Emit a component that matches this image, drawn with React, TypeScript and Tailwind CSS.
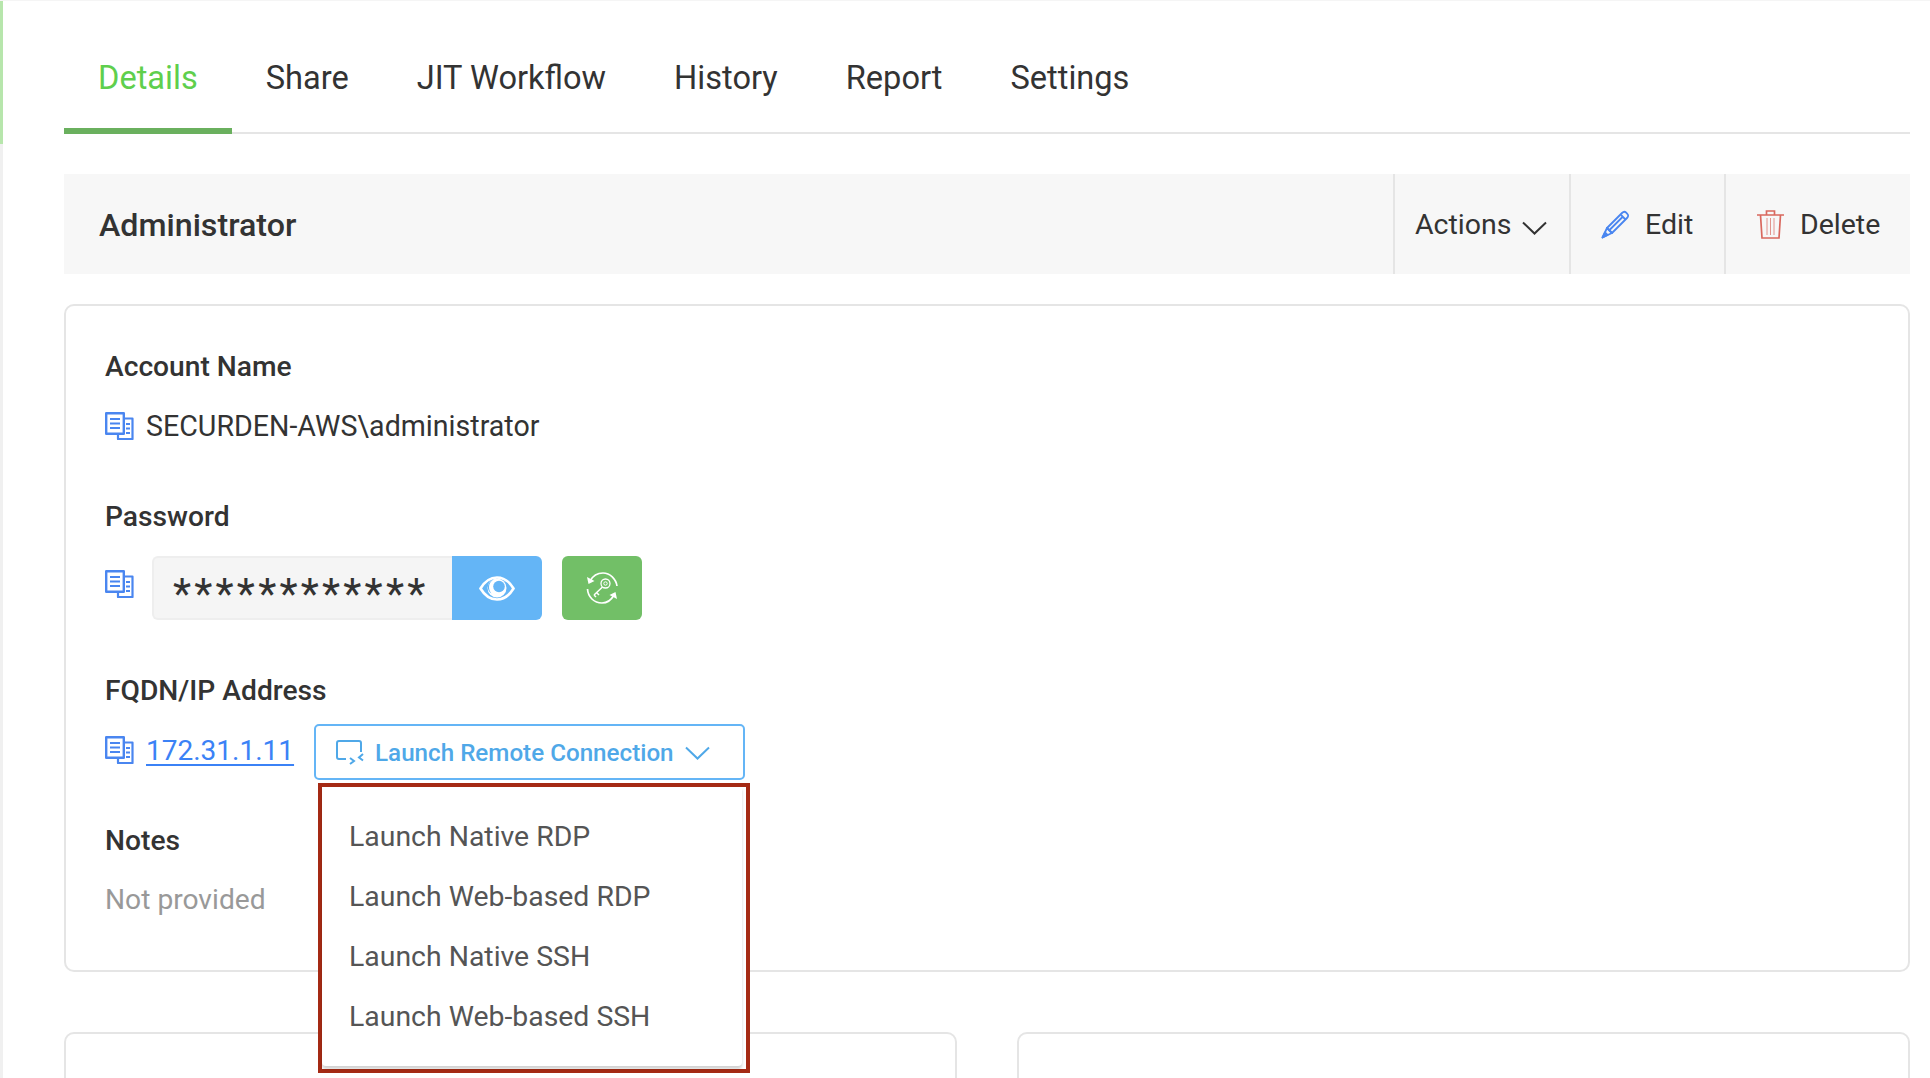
const tabs = ['Details', 'Share', 'JIT Workflow', 'History', 'Report', 'Settings']
const menuItems = ['Launch Native RDP', 'Launch Web-based RDP', 'Launch Native SSH', 'Launch Web-based SSH']

function CopyIcon() {
  return (
    <svg width="29" height="28" viewBox="0 0 29 28" fill="none" stroke="#4a86f0" className="shrink-0">
      <path d="M19 6.500h8.500v20.500H13v-5" strokeWidth="2.200" strokeLinejoin="round" />
      <path d="M1.200 1.200h17.600v20.600H1.200z" strokeWidth="2.400" strokeLinejoin="round" />
      <path d="M5 7h10M5 11.500h10M5 16h10" strokeWidth="2" />
      <path d="M21 12h4M21 16.500h4M21 21h4" strokeWidth="1.800" />
    </svg>
  )
}

function Chevron({ color }: { color: string }) {
  return (
    <svg width="25" height="14" viewBox="0 0 25 14" fill="none" stroke={color} strokeWidth="2" className="shrink-0">
      <path d="M1 1.500 12.500 12.500 24 1.500" />
    </svg>
  )
}

function PencilIcon() {
  return (
    <svg width="29" height="29" viewBox="0 0 29 29" fill="none" stroke="#4a86f0" strokeWidth="1.800" strokeLinejoin="round">
      <path d="M6 18 21 3c1.500-1.500 3-1.500 4.200-.3l1.100 1.100c1.200 1.200 1.200 2.700-.3 4.200L11 23z" />
      <path d="M6 18 1.500 27.500 11 23zM20 5l4.500 4.500M8.500 20 22 6.500" />
      <path d="M1.500 27.500 4 22.500 6.500 25z" fill="#4a86f0" />
    </svg>
  )
}

function TrashIcon() {
  return (
    <svg width="27" height="29" viewBox="0 0 27 29" fill="none" stroke="#d9685e" strokeWidth="1.700">
      <path d="M0 5h27M9.500 5V1h8v4M3.500 5 5 28h17l1.500-23" />
      <path d="M10 8v17M13.500 8v17M17 8v17" strokeWidth="1" opacity="0.7" />
    </svg>
  )
}

function EyeIcon() {
  return (
    <svg width="36" height="25" viewBox="0 0 36 25" fill="none">
      <path d="M1.500 12.500C6 5 11.500 1.500 18 1.500S30 5 34.500 12.500C30 20 24.500 23.500 18 23.500S6 20 1.500 12.500z" stroke="#fff" strokeWidth="2.600" />
      <circle cx="18" cy="12" r="9.500" fill="#fff" />
      <path d="M14.500 3.500a9 9 0 0 0-2 14c-2.500-1.500-4-4-3.500-7.500.3-2.500 2.500-5.500 5.500-6.500z" fill="#64b5f6" />
      <circle cx="20" cy="10.500" r="5.800" fill="#64b5f6" />
    </svg>
  )
}

function KeyRotateIcon() {
  return (
    <svg width="32" height="32" viewBox="0 0 32 32" fill="none" stroke="#fff" strokeWidth="1.500">
      <path d="M4 9C7 3.500 12 1 17 1c7 0 13 6 14 13" strokeWidth="1.700" />
      <path d="M28 23c-3 5.500-7.500 8-12 8C8 31 2 25 1.500 17" strokeWidth="1.700" />
      <path d="M1 5l1.500 7 6-3z" fill="#fff" stroke="none" />
      <path d="M31 27l-1.500-7-6 3z" fill="#fff" stroke="none" />
      <circle cx="19.500" cy="11.500" r="4.500" strokeWidth="1.300" />
      <circle cx="19.500" cy="11.500" r="1.700" strokeWidth="1" />
      <path d="M16.500 15 8 23M10.500 20.500l2.500 2.500M8 23l2 2" strokeWidth="1.500" />
    </svg>
  )
}

function RemoteIcon() {
  return (
    <svg width="28" height="25" viewBox="0 0 28 25" fill="none" stroke="#4fa8e8" strokeWidth="2">
      <path d="M10 19H3a2 2 0 0 1-2-2V3a2 2 0 0 1 2-2h20a2 2 0 0 1 2 2v9" />
      <path d="m14 18 4 3-4 3M27 14l-4 3.500 4 3" />
    </svg>
  )
}

function Label({ children, className }: { children: string; className: string }) {
  return <div className={`text-[28.200px] leading-[32px] font-medium text-[#333] ${className}`}>{children}</div>
}

export default function App() {
  return (
    <div className="flex w-[1930px] h-[1078px] overflow-hidden bg-white border-t border-[#f5f5f5] font-['Roboto',sans-serif] text-[#333]">
      <div className="w-[3px] shrink-0 flex flex-col">
        <div className="h-[143px] bg-[#b7e6ac]" />
        <div className="flex-1 bg-[#f0f0f0]" />
      </div>

      <main className="flex-1 pl-[61px] pr-[20px]">
        <nav className="h-[133px] border-b-2 border-[#e5e5e5] flex items-end">
          {tabs.map(t => (
            <a
              key={t}
              className={`px-[34px] pb-[30px] -mb-[2px] border-b-[6px] text-[32.600px] leading-[40px] ${
                t === 'Details' ? 'text-[#5fcf4d] border-[#6ab05e]' : 'text-[#333] border-transparent'
              }`}
            >
              {t}
            </a>
          ))}
        </nav>

        <section className="mt-[40px] h-[100px] bg-[#f7f7f7] flex items-stretch justify-between">
          <h1 className="pl-[35px] pt-[2px] self-center text-[32.200px] font-medium leading-[40px]">Administrator</h1>
          <div className="flex text-[28.500px]">
            <button className="w-[176px] border-l-2 border-[#e5e5e5] pl-[20px] flex items-center gap-[11px]">
              <span className="pt-[2px]">Actions</span>
              <span className="pt-[8px]">
                <Chevron color="#333" />
              </span>
            </button>
            <button className="w-[155px] border-l-2 border-[#e5e5e5] pl-[30px] flex items-center gap-[15px]">
              <PencilIcon />
              <span className="pt-[2px]">Edit</span>
            </button>
            <button className="w-[186px] border-l-2 border-[#e5e5e5] pl-[31px] flex items-center gap-[16px]">
              <TrashIcon />
              <span className="pt-[2px]">Delete</span>
            </button>
          </div>
        </section>

        <section className="mt-[30px] h-[668px] border-2 border-[#e5e5e5] rounded-[10px] pl-[39px] pt-[45px]">
          <Label className="">Account Name</Label>
          <div className="mt-[27px] flex items-center gap-[12px] text-[28.600px] leading-[32px]">
            <CopyIcon />
            SECURDEN-AWS\administrator
          </div>

          <Label className="mt-[59px]">Password</Label>
          <div className="mt-[23px] flex items-center h-[64px]">
            <div className="-mt-[8px] mr-[18px]">
              <CopyIcon />
            </div>
            <div className="w-[300px] h-full bg-[#f5f5f5] border-2 border-r-0 border-[#eeeeee] rounded-l-[6px] pl-[19px] pt-[11px] flex items-center text-[42px] tracking-[3.200px] text-[#333]">
              ************
            </div>
            <button className="w-[90px] h-full bg-[#64b5f6] rounded-r-[6px] flex items-center justify-center">
              <EyeIcon />
            </button>
            <button className="ml-[20px] w-[80px] h-full bg-[#72bf67] rounded-[6px] flex items-center justify-center">
              <KeyRotateIcon />
            </button>
          </div>

          <Label className="mt-[55px]">FQDN/IP Address</Label>
          <div className="mt-[17px] flex items-center h-[56px]">
            <div className="-mt-[4px] mr-[12px]">
              <CopyIcon />
            </div>
            <a className="-mt-[2px] text-[28px] leading-[32px] text-[#3b82f6] underline underline-offset-4">172.31.1.11</a>
            <div className="relative ml-[20px]">
              <button className="w-[431px] h-[56px] border-2 border-[#64b5f6] rounded-[5px] pl-[20px] flex items-center gap-[11px] text-[24.200px] font-medium text-[#4fa8e8]">
                <RemoteIcon />
                <span className="pt-[3px]">Launch Remote Connection</span>
                <span className="pt-[2px]">
                  <Chevron color="#4fa8e8" />
                </span>
              </button>
              <div className="absolute left-[4px] top-[59px] w-[432px] h-[290px] border-4 border-[#a52a14] bg-white z-10">
                <ul className="h-[279px] w-[420px] pt-[20px] pl-[27px] shadow-[0_3px_3px_rgba(0,0,0,0.18)] rounded-b-[4px] text-[28.400px] text-[#555]">
                  {menuItems.map(m => (
                    <li key={m} className="h-[60px] leading-[60px]">{m}</li>
                  ))}
                </ul>
              </div>
            </div>
          </div>

          <Label className="mt-[45px]">Notes</Label>
          <div className="mt-[27px] text-[28.200px] leading-[32px] text-[#999]">Not provided</div>
        </section>

        <div className="mt-[60px] grid grid-cols-2 gap-[60px]">
          <div className="h-[200px] border-2 border-[#e5e5e5] rounded-[10px]" />
          <div className="h-[200px] border-2 border-[#e5e5e5] rounded-[10px]" />
        </div>
      </main>
    </div>
  )
}
